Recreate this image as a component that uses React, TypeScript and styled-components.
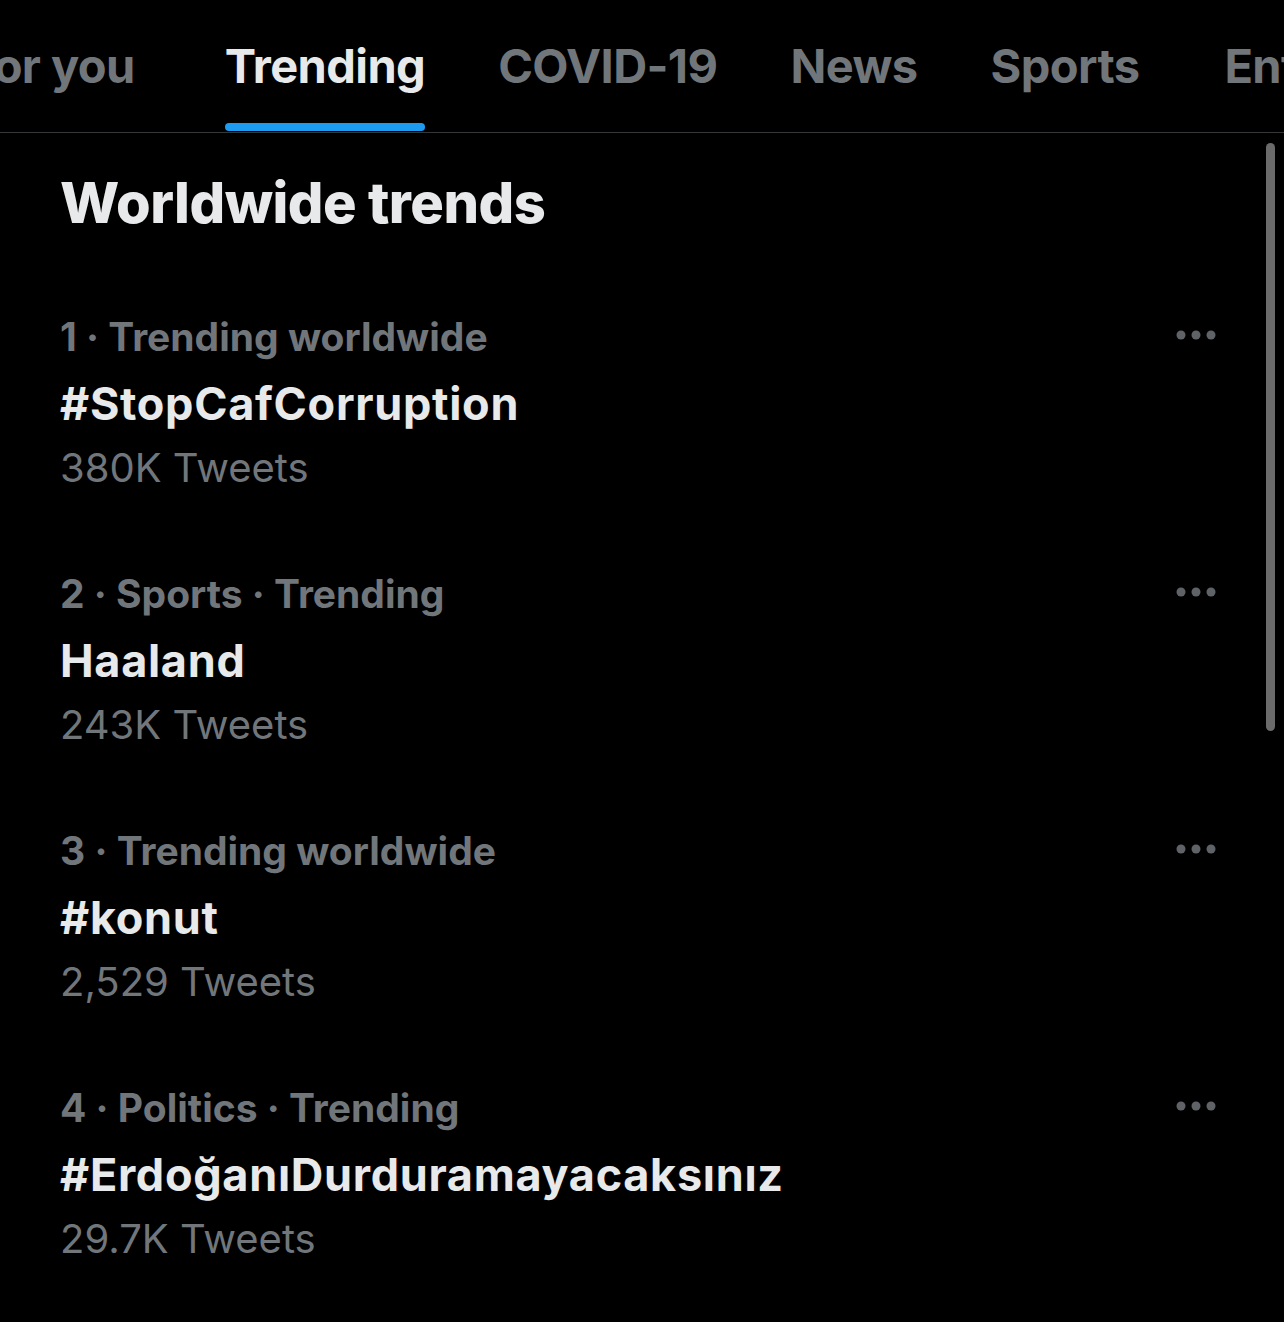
import React from "react";
import styled, { createGlobalStyle } from "styled-components";

const Global = createGlobalStyle`
  html, body { margin: 0; padding: 0; background: #000; }
  body { font-family: Inter, "Noto Sans", "Liberation Sans", sans-serif; color: #e7e9ea; overflow: hidden; }
  * { box-sizing: border-box; }
`;

const Page = styled.div`
  position: relative;
  width: 1284px;
  height: 1322px;
  background: #000;
  overflow: hidden;
`;

const TabBar = styled.nav`
  display: flex;
  height: 133px;
  border-bottom: 1px solid #35383b;
  overflow: hidden;
  white-space: nowrap;
`;

const TabList = styled.div`
  display: flex;
  gap: 73px;
  margin-left: -32px;
`;

const Tab = styled.div<{ $active?: boolean }>`
  position: relative;
  display: flex;
  align-items: center;
  height: 132px;
  font-size: 47px;
  line-height: 60px;
  font-weight: 700;
  letter-spacing: -0.6px;
  color: ${(p) => (p.$active ? "#e7e9ea" : "#71767b")};
  flex-shrink: 0;

  &:first-child {
    margin-right: 17px;
  }
  &:nth-last-child(2) {
    margin-right: 12px;
  }
`;

const Indicator = styled.span`
  position: absolute;
  left: 0;
  right: 0;
  bottom: 1px;
  height: 8px;
  border-radius: 4px;
  background: #1d9bf0;
`;

const Content = styled.main`
  padding: 35px 67px 0 60px;
`;

const Title = styled.h1`
  margin: 0 0 36px;
  font-size: 56px;
  line-height: 70px;
  font-weight: 800;
  letter-spacing: -0.5px;
  color: #e7e9ea;
`;

const Row = styled.section`
  display: flex;
  justify-content: space-between;
  align-items: flex-start;
  padding: 37px 0;
`;

const Info = styled.div`
  display: flex;
  flex-direction: column;
`;

const Meta = styled.div`
  font-size: 39px;
  line-height: 56px;
  font-weight: 700;
  color: #71767b;
  letter-spacing: 0px;
  margin-top: -2px;
  margin-bottom: 2px;
`;

const Tag = styled.div`
  font-size: 45px;
  line-height: 74px;
  font-weight: 700;
  color: #e7e9ea;
  letter-spacing: 0.7px;
`;

const Count = styled.div`
  font-size: 40px;
  line-height: 53px;
  font-weight: 400;
  color: #71767b;
`;

const More = styled.div`
  display: flex;
  align-items: center;
  height: 56px;
  margin-top: -4px;
`;

const Scrollbar = styled.div`
  position: absolute;
  left: 1266px;
  top: 143px;
  width: 9px;
  height: 588px;
  border-radius: 5px;
  background: #6b6b6b;
`;

const Dots = () => (
  <svg width="42" height="12" viewBox="0 0 42 12">
    <circle cx="6" cy="6" r="4.5" fill="#5f6367" />
    <circle cx="21" cy="6" r="4.5" fill="#5f6367" />
    <circle cx="36" cy="6" r="4.5" fill="#5f6367" />
  </svg>
);

const tabs = ["For you", "Trending", "COVID-19", "News", "Sports", "Entertainment"];

const trends = [
  { meta: "1 · Trending worldwide", tag: "#StopCafCorruption", count: "380K Tweets" },
  { meta: "2 · Sports · Trending", tag: "Haaland", count: "243K Tweets" },
  { meta: "3 · Trending worldwide", tag: "#konut", count: "2,529 Tweets" },
  { meta: "4 · Politics · Trending", tag: "#ErdoğanıDurduramayacaksınız", count: "29.7K Tweets" },
];

export default function App() {
  return (
    <Page>
      <Global />
      <TabBar>
        <TabList>
          {tabs.map((t) => (
            <Tab key={t} $active={t === "Trending"}>
              {t}
              {t === "Trending" && <Indicator />}
            </Tab>
          ))}
        </TabList>
      </TabBar>
      <Content>
        <Title>Worldwide trends</Title>
        {trends.map((r) => (
          <Row key={r.tag}>
            <Info>
              <Meta>{r.meta}</Meta>
              <Tag>{r.tag}</Tag>
              <Count>{r.count}</Count>
            </Info>
            <More>
              <Dots />
            </More>
          </Row>
        ))}
      </Content>
      <Scrollbar />
    </Page>
  );
}
